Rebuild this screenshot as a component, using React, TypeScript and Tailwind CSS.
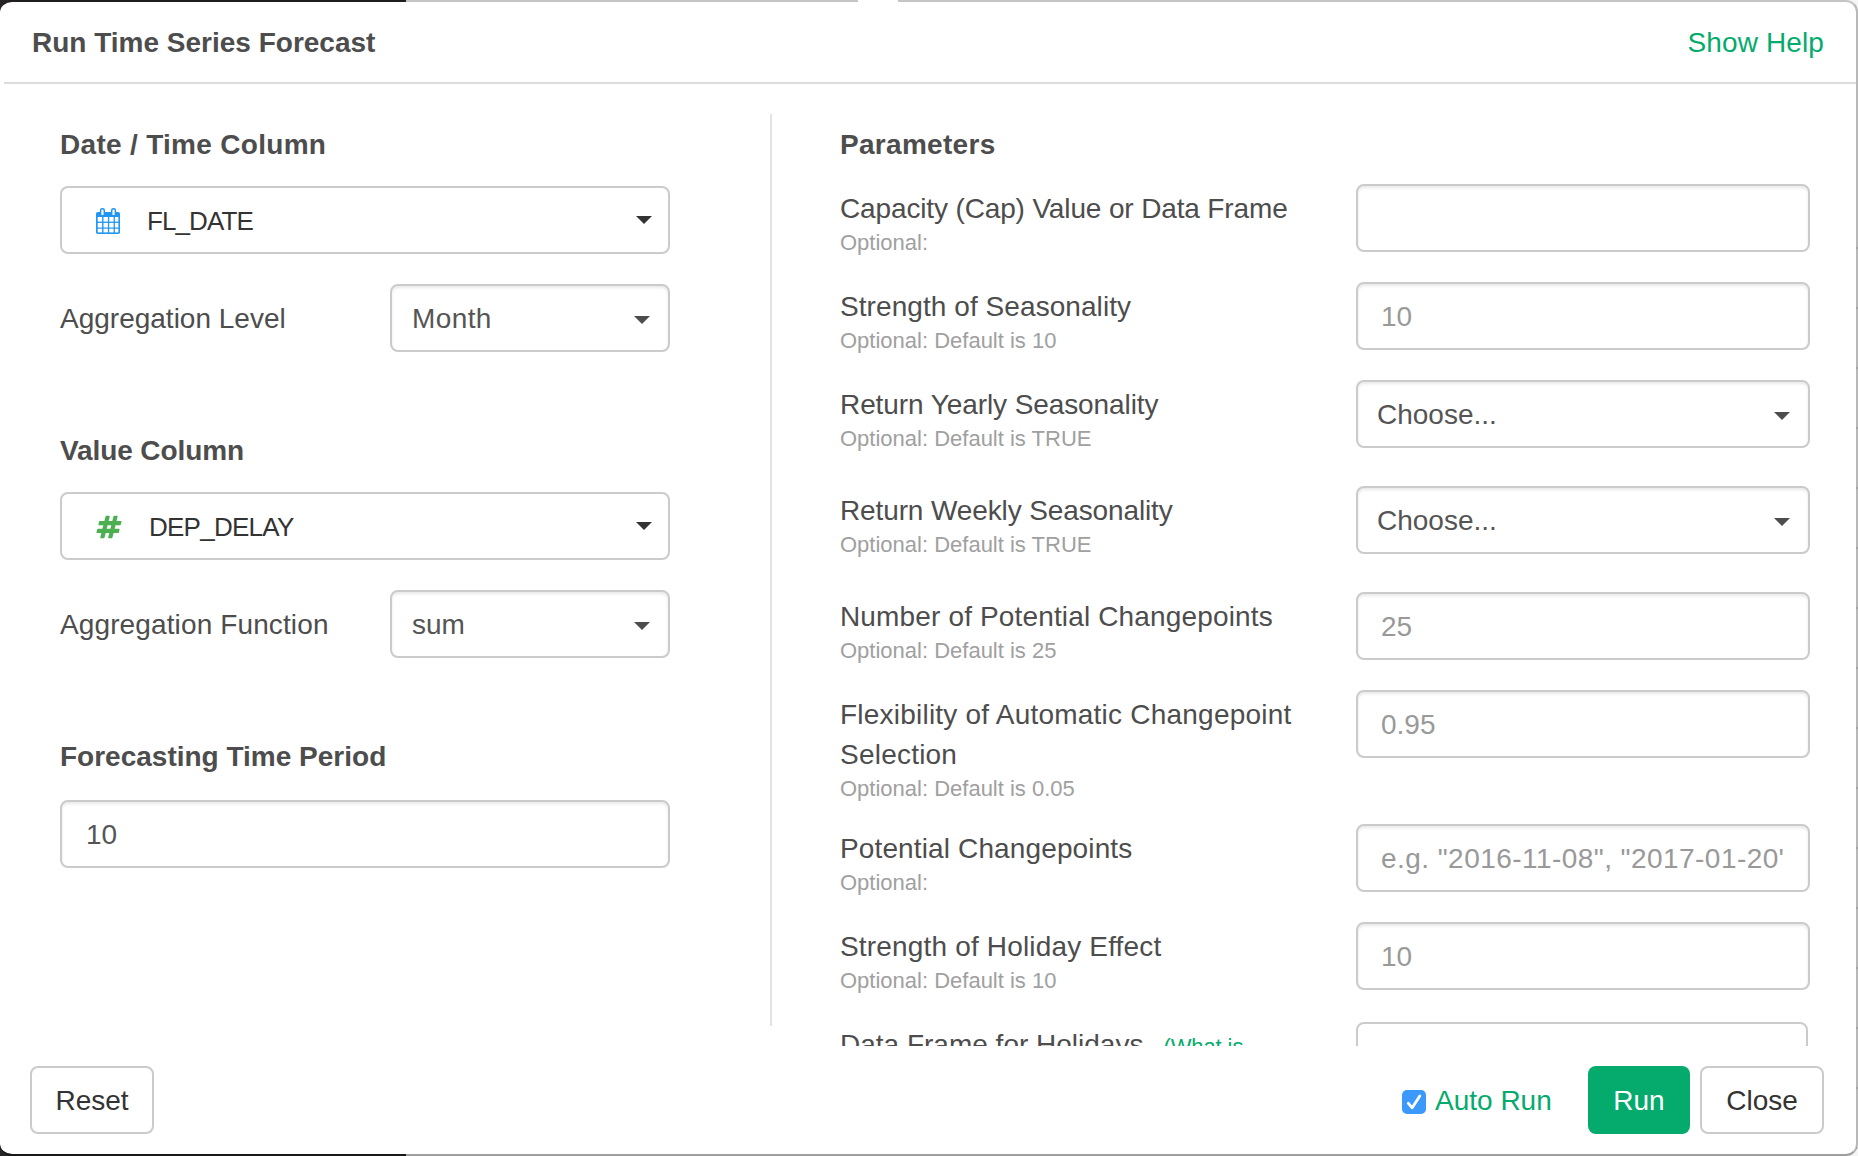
import type { ReactNode } from "react";

function CalendarIcon() {
  return (
    <svg viewBox="0 0 26 26" className="mt-[2px] h-[26px] w-[26px] shrink-0">
      <rect x="1" y="4" width="24" height="22" rx="1.8" fill="#2196f3" />
      <g fill="#fff">
        {[9, 14.9, 20.7].map((y) => (
          <g key={y}>
            <rect x="2.7" y={y} width="4.4" height={y > 20 ? 3.7 : 4.6} />
            <rect x="8.5" y={y} width="4.4" height={y > 20 ? 3.7 : 4.6} />
            <rect x="14.2" y={y} width="4.4" height={y > 20 ? 3.7 : 4.6} />
            <rect x="19.9" y={y} width="3.5" height={y > 20 ? 3.7 : 4.6} />
          </g>
        ))}
      </g>
      <g fill="#fff" stroke="#2196f3" strokeWidth="1.5">
        <rect x="5.6" y="0.8" width="3.7" height="7" rx="1.6" />
        <rect x="16.7" y="0.8" width="3.7" height="7" rx="1.6" />
      </g>
    </svg>
  );
}

function HashIcon() {
  return (
    <svg viewBox="0 0 1792 1792" className="mt-[2px] ml-px h-[26px] w-[26px] shrink-0 fill-[#4caf50]">
      <path d="M991 1024l64-256h-254l-64 256h254zm768-504l-56 224q-7 24-31 24h-327l-64 256h311q15 0 25 12 10 14 6 28l-56 224q-5 24-31 24h-327l-81 328q-7 24-32 24h-224q-16 0-26-12-9-12-6-28l78-312h-254l-81 328q-7 24-32 24h-225q-15 0-25-12-9-12-6-28l78-312h-311q-15 0-25-12-9-12-6-28l56-224q7-24 31-24h327l64-256h-311q-15 0-25-12-10-14-6-28l56-224q5-24 31-24h327l81-328q7-24 32-24h224q15 0 25 12 9 12 6 28l-78 312h254l81-328q7-24 32-24h224q15 0 25 12 9 12 6 28l-78 312h311q15 0 25 12 9 12 6 28z" />
    </svg>
  );
}

function Caret({ className }: { className: string }) {
  return (
    <svg viewBox="0 0 16 8" className={`ml-auto h-2 w-4 shrink-0 ${className}`}>
      <path d="M0 0h16L8 8z" />
    </svg>
  );
}

function ColumnSelect({ icon, children }: { icon: ReactNode; children: ReactNode }) {
  return (
    <div className="flex h-[68px] w-[610px] items-center rounded-lg border-2 border-[#cbcbcb] pr-4 pl-[33px] text-[26px] text-[#333]">
      {icon}
      {children}
      <Caret className="fill-[#333]" />
    </div>
  );
}

function Select({ className, children }: { className: string; children: ReactNode }) {
  return (
    <div
      className={`flex h-[68px] items-center rounded-lg border-2 border-[#cbcbcb] pr-[18px] text-[#555] shadow-[inset_0_2px_3px_rgba(0,0,0,0.09)] ${className}`}
    >
      <span className="pt-[2px]">{children}</span>
      <Caret className="mt-1 fill-[#4d4d4d]" />
    </div>
  );
}

function Input({ className, children }: { className: string; children?: ReactNode }) {
  return (
    <div
      className={`flex h-[68px] items-center rounded-lg border-2 border-[#cbcbcb] pr-6 shadow-[inset_0_2px_3px_rgba(0,0,0,0.09)] ${className}`}
    >
      <span className="overflow-hidden pt-[2px] whitespace-nowrap">{children}</span>
    </div>
  );
}

type Param = {
  label: string;
  hint: string;
  value?: string;
  kind: "input" | "select";
  row: string;
  track: string;
  valueTrack?: string;
};

const params: Param[] = [
  { label: "Capacity (Cap) Value or Data Frame", hint: "Optional:", kind: "input", row: "h-[98px]", track: "tracking-[-0.14px]" },
  { label: "Strength of Seasonality", hint: "Optional: Default is 10", value: "10", kind: "input", row: "h-[98px]", track: "tracking-[0.07px]" },
  { label: "Return Yearly Seasonality", hint: "Optional: Default is TRUE", value: "Choose...", kind: "select", row: "h-[106px]", track: "tracking-[-0.09px]" },
  { label: "Return Weekly Seasonality", hint: "Optional: Default is TRUE", value: "Choose...", kind: "select", row: "h-[106px]", track: "tracking-[-0.12px]" },
  { label: "Number of Potential Changepoints", hint: "Optional: Default is 25", value: "25", kind: "input", row: "h-[98px]", track: "tracking-[0.15px]" },
  { label: "Flexibility of Automatic Changepoint Selection", hint: "Optional: Default is 0.05", value: "0.95", kind: "input", row: "h-[134px]", track: "tracking-[0.22px]" },
  { label: "Potential Changepoints", hint: "Optional:", value: 'e.g. "2016-11-08", "2017-01-20"', kind: "input", row: "h-[98px]", track: "tracking-[0.13px]", valueTrack: "tracking-[0.45px]" },
  { label: "Strength of Holiday Effect", hint: "Optional: Default is 10", value: "10", kind: "input", row: "h-[98px]", track: "tracking-[0.17px]" },
];

function ParamRow({ p }: { p: Param }) {
  return (
    <div className={`flex shrink-0 items-start justify-between ${p.row}`}>
      <div className="w-[470px] pt-[5px]">
        <div className={`leading-10 ${p.track}`}>{p.label}</div>
        <div className="text-[22px] leading-7 text-[#a0a0a0]">{p.hint}</div>
      </div>
      {p.kind === "select" ? (
        <Select className="w-[454px] pl-[19px]">{p.value}</Select>
      ) : (
        <Input className={`w-[454px] pl-[23px] text-[#999] ${p.valueTrack ?? ""}`}>{p.value}</Input>
      )}
    </div>
  );
}

/* Slivers of the page that stay visible around the dialog. */
function Backdrop() {
  return (
    <div className="absolute inset-0 flex">
      <div className="w-[406px] bg-[#272525]" />
      <div className="flex-1 bg-[#f5f5f5]" />
      <div className="mt-[247px] w-[2px] bg-[repeating-linear-gradient(#f5f5f5_0_0,#dadada_0_2px,#f5f5f5_2px_60px)]" />
    </div>
  );
}

export default function App() {
  return (
    <div className="relative h-[1156px] w-[1858px] overflow-hidden bg-[#f5f5f5] font-['Liberation_Sans',Arial,sans-serif] text-[28px] leading-10 text-[#4d4d4d]">
      <Backdrop />
      <div className="relative flex h-full w-full flex-col rounded-xl border-y-2 border-r-2 border-t-black/20 border-r-black/25 border-b-black/35 bg-white bg-clip-padding">
        <header className="ml-1 flex h-[82px] shrink-0 items-center justify-between border-b-2 border-[#dcdcdc] pt-[2px] pr-8 pl-7">
          <h1 className="font-bold">Run Time Series Forecast</h1>
          <a className="tracking-[0.13px] text-[#04ab6c]">Show Help</a>
        </header>

        <main className="flex h-[962px] shrink-0 overflow-hidden pt-[30px]">
          <section className="flex h-[912px] w-[772px] shrink-0 flex-col border-r-2 border-[#e3e3e3] pt-[11px] pl-[60px]">
            <h2 className="font-bold tracking-[0.3px]">Date / Time Column</h2>
            <div className="mt-[21px]">
              <ColumnSelect icon={<CalendarIcon />}>
                <span className="ml-[26px] pt-[2px] tracking-[-0.9px]">FL_DATE</span>
              </ColumnSelect>
            </div>
            <div className="mt-[30px] flex w-[610px] items-center justify-between">
              <span className="pt-[2px]">Aggregation Level</span>
              <Select className="w-[280px] pl-5 tracking-[0.4px]">Month</Select>
            </div>

            <h2 className="mt-[79px] font-bold tracking-[-0.1px]">Value Column</h2>
            <div className="mt-[21px]">
              <ColumnSelect icon={<HashIcon />}>
                <span className="ml-[27px] pt-[2px] tracking-[-0.75px]">DEP_DELAY</span>
              </ColumnSelect>
            </div>
            <div className="mt-[30px] flex w-[610px] items-center justify-between">
              <span className="pt-[2px] tracking-[0.12px]">Aggregation Function</span>
              <Select className="w-[280px] pl-5">sum</Select>
            </div>

            <h2 className="mt-[79px] font-bold">Forecasting Time Period</h2>
            <Input className="mt-[23px] w-[610px] shrink-0 pl-6 text-[#555]">10</Input>
          </section>

          <section className="flex w-[1038px] shrink-0 flex-col pt-[11px] pl-[68px]">
            <h2 className="mb-[19px] font-bold tracking-[0.3px]">Parameters</h2>
            {params.map((p) => (
              <ParamRow key={p.label} p={p} />
            ))}
            <div className="flex shrink-0 items-start pt-[2px]">
              <div className="w-[516px] pt-[3px] leading-10">
                Data Frame for Holidays
                <a className="ml-5 text-[22px] tracking-[-0.1px] text-[#04ab6c]">(What is</a>
              </div>
              <div className="flex h-[68px] w-[452px] items-center rounded-lg border-2 border-[#cbcbcb] pt-[2px] pr-6 pl-[23px] text-[#555]">
                Choose...
              </div>
            </div>
          </section>
        </main>

        <footer className="flex flex-1 items-start justify-between pt-5 pr-8 pl-[30px] text-[#333]">
          <button className="h-[68px] w-[124px] rounded-lg border-2 border-[#cbcbcb] bg-white pt-[2px]">Reset</button>
          <div className="flex items-center">
            <span className="mt-1 flex h-6 w-6 items-center justify-center rounded-[5px] bg-[#3b99fc]">
              <svg viewBox="0 0 24 24" className="h-6 w-6 fill-none stroke-white stroke-[2.8]">
                <path d="M6.2 13.2l4 4.6L17.8 6" strokeLinecap="round" strokeLinejoin="round" />
              </svg>
            </span>
            <span className="ml-[9px] w-[153px] pt-[2px] text-[#04ab6c]">Auto Run</span>
            <button className="h-[68px] w-[102px] rounded-lg bg-[#04ab6c] pt-[2px] text-white">Run</button>
            <button className="ml-[10px] h-[68px] w-[124px] rounded-lg border-2 border-[#cbcbcb] bg-white pt-[2px]">
              Close
            </button>
          </div>
        </footer>
      </div>
      <div className="absolute top-0 left-[858px] h-[2px] w-10 bg-white" />
    </div>
  );
}
